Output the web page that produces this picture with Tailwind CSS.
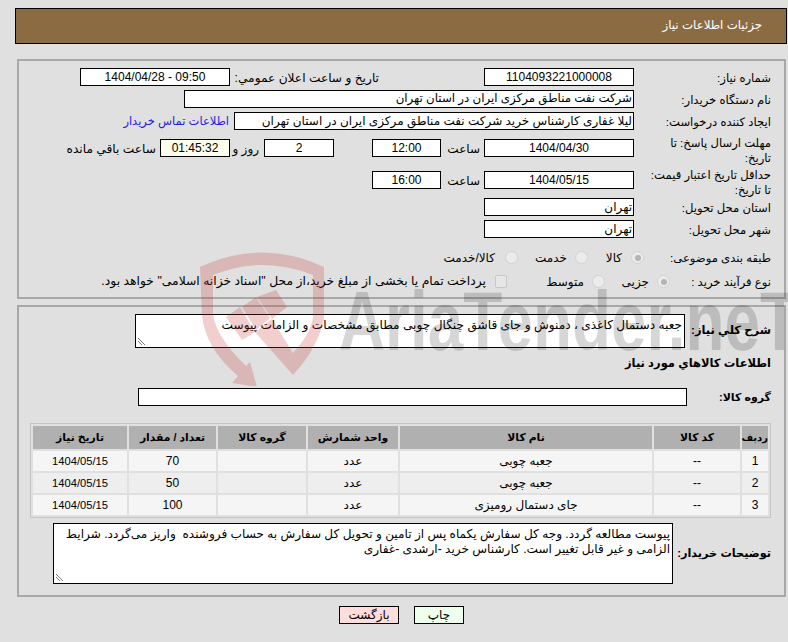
<!DOCTYPE html>
<html dir="rtl" lang="fa">
<head>
<meta charset="utf-8">
<script src="https://cdn.jsdelivr.net/npm/@tailwindcss/browser@4"></script>
<title>جزئیات اطلاعات نیاز</title>
</head>
<body class="relative h-[642px] w-[788px] overflow-hidden bg-[#e0e0e0] font-['Liberation_Sans','DejaVu_Sans',sans-serif] text-[12px] text-black">

<div class="relative pr-px pl-[15px] pt-2">
  <div class="flex h-[36px] items-center border border-black bg-[#8b6c42] pr-[24px] text-[11.8px] text-white">جزئیات اطلاعات نیاز</div>

  <!-- details -->
  <div class="mt-[15px] ml-[2px] mr-px h-[240px] border-2 border-[#a8a8a8] pr-[13px] pt-[7px]">
    <div class="flex h-[22px] items-start">
      <div class="w-[137px] pt-px text-[11.6px]">شماره نیاز:</div>
      <div class="flex h-[18px] w-[150px] items-center justify-center border border-black bg-white">1104093221000008</div>
      <div class="mr-[105px] w-[144px] whitespace-nowrap pt-px text-[12.2px]">تاریخ و ساعت اعلان عمومي:</div>
      <div class="mr-[5px] flex h-[18px] w-[150px] items-center justify-center border border-black bg-white" dir="ltr">1404/04/28 - 09:50</div>
    </div>
    <div class="flex h-[22px] items-start">
      <div class="w-[137px] pt-px text-[11.6px]">نام دستگاه خریدار:</div>
      <div class="flex h-[18px] w-[450px] items-center border border-black bg-white pr-px text-[11.8px]">شرکت نفت مناطق مرکزی ایران در استان تهران</div>
    </div>
    <div class="flex h-[27px] items-start">
      <div class="w-[137px] pt-px text-[11.6px]">ایجاد کننده درخواست:</div>
      <div class="flex h-[18px] w-[400px] items-center overflow-hidden whitespace-nowrap border border-black bg-white pr-px">لیلا غفاری کارشناس خرید شرکت نفت مناطق مرکزی ایران در استان تهران</div>
      <div class="mr-[5px] pt-px text-[11.5px] text-[#2222dd]">اطلاعات تماس خریدار</div>
    </div>
    <div class="flex h-[32px] items-start">
      <div class="-mt-[4px] w-[137px] text-[11.6px] leading-[15px]">مهلت ارسال پاسخ: تا<br>تاریخ:</div>
      <div class="flex h-[18px] w-[150px] items-center justify-center border border-black bg-white">1404/04/30</div>
      <div class="mr-[4px] w-[34px] pt-px">ساعت</div>
      <div class="mr-[5px] flex h-[18px] w-[69px] items-center justify-center border border-black bg-white">12:00</div>
      <div class="mr-[38px] flex h-[18px] w-[70px] items-center justify-center border border-black bg-white">2</div>
      <div class="mr-[5px] w-[29px] pt-px">روز و</div>
      <div class="flex h-[18px] w-[70px] items-center justify-center border border-black bg-[#ffffee]">01:45:32</div>
      <div class="mr-[4px] pt-px text-[12.2px]">ساعت باقي مانده</div>
    </div>
    <div class="flex h-[27px] items-start">
      <div class="-mt-[4px] w-[137px] text-[11.6px] leading-[15px]">حداقل تاریخ اعتبار قیمت:<br>تا تاریخ:</div>
      <div class="flex h-[18px] w-[150px] items-center justify-center border border-black bg-white">1404/05/15</div>
      <div class="mr-[4px] w-[34px] pt-px">ساعت</div>
      <div class="mr-[5px] flex h-[18px] w-[69px] items-center justify-center border border-black bg-white">16:00</div>
    </div>
    <div class="flex h-[22px] items-start">
      <div class="w-[137px] pt-px text-[11.6px]">استان محل تحویل:</div>
      <div class="flex h-[18px] w-[150px] items-center border border-black bg-white pr-px">تهران</div>
    </div>
    <div class="flex h-[26px] items-start">
      <div class="w-[137px] pt-px text-[11.6px]">شهر محل تحویل:</div>
      <div class="flex h-[18px] w-[150px] items-center border border-black bg-white pr-px">تهران</div>
    </div>
    <div class="flex h-[23px] items-center">
      <div class="w-[127px] whitespace-nowrap text-[11.6px]">طبقه بندی موضوعی:</div>
      <div class="flex h-[13px] w-[13px] items-center justify-center rounded-full border border-[#d2d2d2] bg-[#ebebeb]"><div class="h-[6px] w-[6px] rounded-full bg-[#b4b4b4]"></div></div>
      <div class="mr-[9px] w-[34px]">کالا</div>
      <div class="h-[13px] w-[13px] rounded-full border border-[#d2d2d2] bg-[#ebebeb]"></div>
      <div class="mr-[8px] w-[49px]">خدمت</div>
      <div class="h-[13px] w-[13px] rounded-full border border-[#d2d2d2] bg-[#ebebeb]"></div>
      <div class="mr-[10px]">کالا/خدمت</div>
    </div>
    <div class="flex h-[25px] items-center">
      <div class="w-[101px] whitespace-nowrap text-[11.6px]">نوع فرآیند خرید :</div>
      <div class="flex h-[13px] w-[13px] items-center justify-center rounded-full border border-[#d2d2d2] bg-[#ebebeb]"><div class="h-[6px] w-[6px] rounded-full bg-[#b4b4b4]"></div></div>
      <div class="mr-[8px] w-[44px]">جزیی</div>
      <div class="h-[13px] w-[13px] rounded-full border border-[#d2d2d2] bg-[#ebebeb]"></div>
      <div class="mr-[8px] w-[77px]">متوسط</div>
      <div class="h-[13px] w-[12px] rounded-[2px] border border-[#c8c8c8] bg-[#e6e6e6]"></div>
      <div class="mr-[9px] whitespace-nowrap text-[12.35px]">پرداخت تمام یا بخشی از مبلغ خرید،از محل "اسناد خزانه اسلامی" خواهد بود.</div>
    </div>
  </div>

  <!-- items -->
  <div class="mt-[6px] ml-[2px] mr-px h-[292px] border-2 border-[#a8a8a8] pr-[13px] pt-[7px]">
    <div class="flex items-center">
      <div class="w-[86px] whitespace-nowrap text-[11.5px] font-bold">شرح کلي نیاز:</div>
      <div class="relative h-[34px] w-[550px] border border-black bg-white px-[2px] text-[12.15px] leading-[20px]">جعبه دستمال کاغذی ، دمنوش و جای قاشق چنگال چوبی مطابق مشخصات و الزامات پیوست
        <svg class="absolute bottom-px left-px" width="9" height="9" viewBox="0 0 9 9"><path d="M1 1 L8 8 M1 4 L5 8" stroke="#777" fill="none"/></svg>
      </div>
    </div>
    <div class="mt-[7px] h-[16px] text-[11.5px] font-bold leading-[16px]">اطلاعات کالاهاي مورد نیاز</div>
    <div class="mt-[17px] flex h-[18px] items-center">
      <div class="w-[84px] whitespace-nowrap text-[11px] font-bold">گروه کالا:</div>
      <div class="h-[18px] w-[549px] border border-black bg-white"></div>
    </div>
    <table class="mt-[17px] w-[741px] table-fixed border-separate border-spacing-[2px] border border-[#c4c4c4] text-center">
      <thead>
        <tr class="h-[23px] bg-[#b0b0b0] text-[10.8px] font-bold">
          <th class="w-[26px] text-[10px] font-bold">ردیف</th><th class="w-[86px] font-bold">کد کالا</th><th class="w-[252px] font-bold">نام کالا</th><th class="w-[90px] font-bold">واحد شمارش</th><th class="w-[88px] font-bold">گروه کالا</th><th class="w-[87px] font-bold">تعداد / مقدار</th><th class="w-[94px] font-bold">تاریخ نیاز</th>
        </tr>
      </thead>
      <tbody>
        <tr class="h-[20px] bg-[#f5f5f5]"><td>1</td><td>--</td><td>جعبه چوبی</td><td>عدد</td><td></td><td>70</td><td class="text-[11.2px]">1404/05/15</td></tr>
        <tr class="h-[20px] bg-[#eeeeee]"><td>2</td><td>--</td><td>جعبه چوبی</td><td>عدد</td><td></td><td>50</td><td class="text-[11.2px]">1404/05/15</td></tr>
        <tr class="h-[20px] bg-[#f5f5f5]"><td>3</td><td>--</td><td>جای دستمال رومیزی</td><td>عدد</td><td></td><td>100</td><td class="text-[11.2px]">1404/05/15</td></tr>
      </tbody>
    </table>
    <div class="mt-[5px] flex items-center">
      <div class="w-[98px] whitespace-nowrap text-[11.3px] font-bold">توضیحات خریدار:</div>
      <div class="relative h-[61px] w-[620px] border border-black bg-white px-[2px] pt-[3px] text-[12.1px] leading-[15px]">پیوست مطالعه گردد. وجه کل سفارش یکماه پس از تامین و تحویل کل سفارش به حساب فروشنده &nbsp;واریز می‌گردد. شرایط الزامی و غیر قابل تغییر است. کارشناس خرید -ارشدی -غفاری
        <svg class="absolute bottom-px left-px" width="9" height="9" viewBox="0 0 9 9"><path d="M1 1 L8 8 M1 4 L5 8" stroke="#777" fill="none"/></svg>
      </div>
    </div>
  </div>

  <!-- buttons -->
  <div class="mt-[9px] flex justify-center gap-[15px] pl-px">
    <div class="flex h-[18px] w-[50px] items-center justify-center border border-black bg-[#eeffee]">چاپ</div>
    <div class="flex h-[18px] w-[60px] items-center justify-center border border-black bg-[#ffdddd]">بازگشت</div>
  </div>
</div>

<!-- watermark, laid over the page -->
<div class="pointer-events-none absolute left-0 top-0 h-[386px] w-full overflow-hidden" dir="ltr">
  <svg class="absolute left-[200px] top-[250px]" width="126" height="140" viewBox="0 0 126 140">
    <path d="M0 17 Q62 -12 124 17 V68 Q118 98 93 125 L55 82 L72 69 L93 103 Q110 85 113 68 V25 Q62 5 13 25 V65 Q17 88 46 116 L50 112 L57 137 L32 133 L38 126 Q5 98 2 65 Z" fill="#c43030" fill-opacity="0.23"/>
    <path d="M26 67 L40 57 L55 82 L42 90 Z M42 57 L56 47 L70 68 L56 80 Z M57 47 L76 40 L87 57 L72 69 Z" fill="#c43030" fill-opacity="0.23"/>
  </svg>
  <div class="absolute left-[339px] top-[279px] origin-left scale-x-[0.76] whitespace-nowrap text-[84px] font-bold leading-none text-black/[0.16]">AriaTender.neT</div>
</div>
</body>
</html>
